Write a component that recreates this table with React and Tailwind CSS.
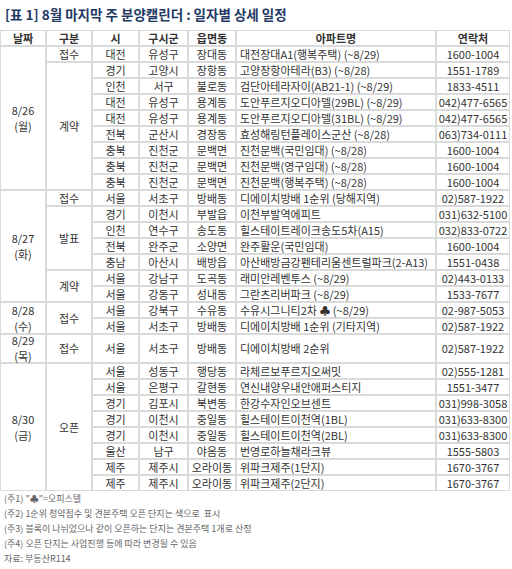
import React from 'react';

const span = {
  1: 'row-span-1',
  2: 'row-span-2',
  4: 'row-span-4',
  7: 'row-span-7',
  8: 'row-span-8',
  9: 'row-span-9',
};

const Y = 'bg-[#fff2cc]';
const G = 'bg-[#e2efda]';

// each day: groups of rows; each group has a 구분 label
const days = [
  {
    date: '8/26',
    dow: '(월)',
    groups: [
      { kind: '접수', rows: [['대전', '유성구', '장대동', '대전장대A1(행복주택) (~8/29)', '1600-1004', Y]] },
      {
        kind: '계약',
        rows: [
          ['경기', '고양시', '장항동', '고양장항아테라(B3) (~8/28)', '1551-1789'],
          ['인천', '서구', '불로동', '검단아테라자이(AB21-1) (~8/29)', '1833-4511'],
          ['대전', '유성구', '용계동', '도안푸르지오디아델(29BL) (~8/29)', '042)477-6565'],
          ['대전', '유성구', '용계동', '도안푸르지오디아델(31BL) (~8/29)', '042)477-6565'],
          ['전북', '군산시', '경장동', '효성해링턴플레이스군산 (~8/28)', '063)734-0111'],
          ['충북', '진천군', '문백면', '진천문백(국민임대) (~8/28)', '1600-1004'],
          ['충북', '진천군', '문백면', '진천문백(영구임대) (~8/28)', '1600-1004'],
          ['충북', '진천군', '문백면', '진천문백(행복주택) (~8/28)', '1600-1004'],
        ],
      },
    ],
  },
  {
    date: '8/27',
    dow: '(화)',
    groups: [
      { kind: '접수', rows: [['서울', '서초구', '방배동', '디에이치방배 1순위 (당해지역)', '02)587-1922', Y]] },
      {
        kind: '발표',
        rows: [
          ['경기', '이천시', '부발읍', '이천부발역에피트', '031)632-5100'],
          ['인천', '연수구', '송도동', '힐스테이트레이크송도5차(A15)', '032)833-0722'],
          ['전북', '완주군', '소양면', '완주활운(국민임대)', '1600-1004'],
          ['충남', '아산시', '배방읍', '아산배방금강펜테리움센트럴파크(2-A13)', '1551-0438'],
        ],
      },
      {
        kind: '계약',
        rows: [
          ['서울', '강남구', '도곡동', '래미안레벤투스 (~8/29)', '02)443-0133'],
          ['서울', '강동구', '성내동', '그란츠리버파크 (~8/29)', '1533-7677'],
        ],
      },
    ],
  },
  {
    date: '8/28',
    dow: '(수)',
    groups: [
      {
        kind: '접수',
        rows: [
          ['서울', '강북구', '수유동', '수유시그니티2차 ♣ (~8/29)', '02-987-5053', Y],
          ['서울', '서초구', '방배동', '디에이치방배 1순위 (기타지역)', '02)587-1922'],
        ],
      },
    ],
  },
  {
    date: '8/29',
    dow: '(목)',
    groups: [{ kind: '접수', rows: [['서울', '서초구', '방배동', '디에이치방배 2순위', '02)587-1922']] }],
  },
  {
    date: '8/30',
    dow: '(금)',
    groups: [
      {
        kind: '오픈',
        rows: [
          ['서울', '성동구', '행당동', '라체르보푸르지오써밋', '02)555-1281', G],
          ['서울', '은평구', '갈현동', '연신내양우내안애퍼스티지', '1551-3477', G],
          ['경기', '김포시', '북변동', '한강수자인오브센트', '031)998-3058', G],
          ['경기', '이천시', '중일동', '힐스테이트이천역(1BL)', '031)633-8300', G],
          ['경기', '이천시', '중일동', '힐스테이트이천역(2BL)', '031)633-8300', G],
          ['울산', '남구', '야음동', '번영로하늘채라크뷰', '1555-5803', G],
          ['제주', '제주시', '오라이동', '위파크제주(1단지)', '1670-3767', G],
          ['제주', '제주시', '오라이동', '위파크제주(2단지)', '1670-3767', G],
        ],
      },
    ],
  },
];

const cell = 'flex items-center justify-center bg-white text-[11px] leading-none text-[#333] whitespace-nowrap';

const Table = () => {
  const cells = [];
  ['날짜', '구분', '시', '구시군', '읍면동', '아파트명', '연락처'].forEach((h) =>
    cells.push(
      <div key={'h' + h} className={`${cell} font-bold text-[#222]`}>
        {h}
      </div>
    )
  );

  days.forEach((d) => {
    const total = d.groups.reduce((n, g) => n + g.rows.length, 0);
    cells.push(
      <div key={d.date} className={`${cell} ${span[total]} flex-col gap-[5px] leading-none`}>
        <span>{d.date}</span>
        <span>{d.dow}</span>
      </div>
    );
    d.groups.forEach((g, gi) => {
      g.rows.forEach((r, ri) => {
        const k = `${d.date}-${gi}-${ri}`;
        if (ri === 0)
          cells.push(
            <div key={k + 'g'} className={`${cell} ${span[g.rows.length]}`}>
              {g.kind}
            </div>
          );
        cells.push(<div key={k + 'a'} className={cell}>{r[0]}</div>);
        cells.push(<div key={k + 'b'} className={cell}>{r[1]}</div>);
        cells.push(<div key={k + 'c'} className={cell}>{r[2]}</div>);
        cells.push(
          <div key={k + 'd'} className={`${cell} justify-start pl-[3px] ${r[5] || ''}`}>
            {r[3]}
          </div>
        );
        cells.push(<div key={k + 'e'} className={cell}>{r[4]}</div>);
      });
    });
  });

  return (
    <div className="grid w-[510px] grid-cols-[44px_44px_45px_47px_46px_198px_72px] grid-rows-[repeat(19,14px)_27px_repeat(8,14px)] gap-[2px] bg-[#dadada] p-px">
      {cells}
    </div>
  );
};

export default function App() {
  return (
    <div className="w-[512px] h-[569px] bg-white overflow-hidden" style={{ fontFamily: '"Noto Sans CJK KR", "Noto Sans", sans-serif' }}>
      <div className="h-[30px] flex items-center pl-[5px] text-[13.5px] font-bold text-[#1f3864] leading-none">
        [표 1] 8월 마지막 주 분양캘린더 : 일자별 상세 일정
      </div>
      <Table />
      <div className="pl-[4px] text-[9px] leading-none text-[#666]">
        <div className="h-[15px] flex items-center">(주1) "♣"=오피스텔</div>
        <div className="h-[15px] flex items-center">(주2) 1순위 청약접수 및 견본주택 오픈 단지는 색으로&nbsp; 표시</div>
        <div className="h-[15px] flex items-center">(주3) 블록이 나뉘었으나 같이 오픈하는 단지는 견본주택 1개로 산정</div>
        <div className="h-[15px] flex items-center">(주4) 오픈 단지는 사업진행 등에 따라 변경될 수 있음</div>
        <div className="h-[15px] flex items-center">자료: 부동산R114</div>
      </div>
    </div>
  );
}
